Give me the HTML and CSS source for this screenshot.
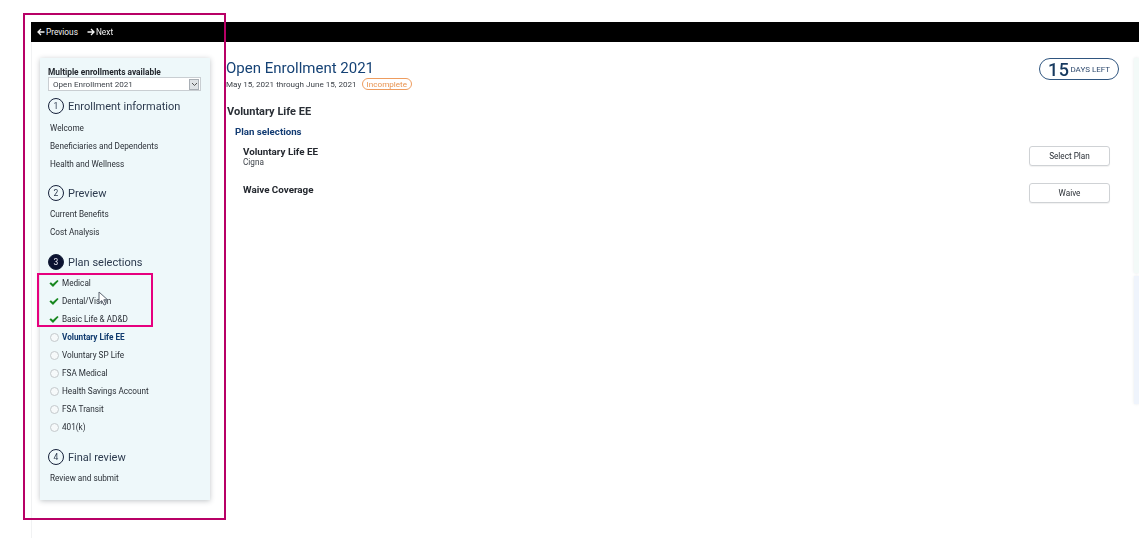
FILE: index.html
```html
<!DOCTYPE html>
<html lang="en">
<head>
<meta charset="utf-8">
<title>Open Enrollment 2021</title>
<link rel="stylesheet" href="styles.css">
</head>
<body>
<div class="app">
  <nav class="topbar">
    <span class="toplink"><svg width="8" height="8" viewBox="0 0 8 8"><path d="M7.500 4H1.500M4 1L1 4l3 3" fill="none" stroke="#f2f2f2" stroke-width="1.300"/></svg>Previous</span>
    <span class="toplink"><svg width="8" height="8" viewBox="0 0 8 8"><path d="M.5 4h6M4 1l3 3-3 3" fill="none" stroke="#f2f2f2" stroke-width="1.300"/></svg>Next</span>
  </nav>
  <div class="content">
    <aside class="sidebar">
      <label class="enroll-label">Multiple enrollments available</label>
      <div class="select">
        <span class="select-text">Open Enrollment 2021</span>
        <span class="select-btn"><svg width="7" height="5" viewBox="0 0 7 5"><path d="M1 1l2.500 2.500L6 1" fill="none" stroke="#555" stroke-width="1"/></svg></span>
      </div>
      <h2 class="step first"><span class="num">1</span>Enrollment information</h2>
      <ul class="links links-first">
        <li>Welcome</li>
        <li>Beneficiaries and Dependents</li>
        <li>Health and Wellness</li>
      </ul>
      <h2 class="step"><span class="num">2</span>Preview</h2>
      <ul class="links">
        <li>Current Benefits</li>
        <li>Cost Analysis</li>
      </ul>
      <h2 class="step"><span class="num active">3</span>Plan selections</h2>
      <ul class="plans">
        <li><svg class="check" width="10" height="9" viewBox="0 0 10 9"><path d="M.4 4.600l1.500-1.300 2 1.600L8.300.9l1.300 1.200L4 7.900z" fill="#17871f"/></svg>Medical</li>
        <li><svg class="check" width="10" height="9" viewBox="0 0 10 9"><path d="M.4 4.600l1.500-1.300 2 1.600L8.300.9l1.300 1.200L4 7.900z" fill="#17871f"/></svg>Dental/Vision</li>
        <li><svg class="check" width="10" height="9" viewBox="0 0 10 9"><path d="M.4 4.600l1.500-1.300 2 1.600L8.300.9l1.300 1.200L4 7.900z" fill="#17871f"/></svg>Basic Life &amp; AD&amp;D</li>
        <li class="current"><span class="radio"></span>Voluntary Life EE</li>
        <li><span class="radio"></span>Voluntary SP Life</li>
        <li><span class="radio"></span>FSA Medical</li>
        <li><span class="radio"></span>Health Savings Account</li>
        <li><span class="radio"></span>FSA Transit</li>
        <li><span class="radio"></span>401(k)</li>
      </ul>
      <h2 class="step"><span class="num">4</span>Final review</h2>
      <ul class="links">
        <li>Review and submit</li>
      </ul>
    </aside>
    <main class="main">
      <header class="head">
        <div>
          <h1 class="title">Open Enrollment 2021</h1>
          <div class="dates">May 15, 2021 through June 15, 2021<span class="badge">Incomplete</span></div>
        </div>
        <div class="days"><strong>15</strong><span>DAYS LEFT</span></div>
      </header>
      <h2 class="section">Voluntary Life EE</h2>
      <h3 class="sub">Plan selections</h3>
      <div class="plan plan-one">
        <div><div class="plan-name">Voluntary Life EE</div><div class="plan-co">Cigna</div></div>
        <button class="btn">Select Plan</button>
      </div>
      <div class="plan plan-two">
        <div><div class="plan-name">Waive Coverage</div></div>
        <button class="btn">Waive</button>
      </div>
    </main>
    <div class="rail">
      <div class="rail-a"></div>
      <div class="rail-b"></div>
    </div>
  </div>
</div>
<div class="mark mark-outer"></div>
<div class="mark mark-inner"></div>
<svg class="cursor" width="11" height="15" viewBox="0 0 11 15"><path d="M1 1v11l2.800-2.400L6 14l2-.9-2.200-4.300H9.600z" fill="#fff" stroke="#5a6470" stroke-width="1"/></svg>
</body>
</html>
```
FILE: styles.css
```css
* { box-sizing: border-box; }
html, body { margin: 0; padding: 0; }
body {
  width: 1139px;
  height: 538px;
  overflow: hidden;
  background: #fff;
  font-family: Roboto, "Liberation Sans", sans-serif;
  color: #2a2f36;
  position: relative;
}
.app {
  margin: 22px 0 0 31px;
  height: 516px;
  display: flex;
  flex-direction: column;
  border-left: 1px solid #f1f2f3;
  filter: blur(.3px);
}
.topbar {
  height: 20px;
  background: #000;
  color: #f2f2f2;
  display: flex;
  align-items: center;
  gap: 9px;
  padding-left: 6px;
  font-size: 8.300px;
  margin-left: -1px;
}
.toplink { display: flex; align-items: center; gap: 1px; }
.content { flex: 1; display: flex; min-height: 0; }
.sidebar {
  width: 170px;
  height: 442px;
  margin: 16px 0 0 8px;
  padding: 9px 8px 0;
  background: #eef8fa;
  box-shadow: 0 1px 5px rgba(60, 70, 80, .32);
  flex: none;
}
.enroll-label {
  display: block;
  font-size: 8.350px;
  font-weight: 700;
  line-height: 10px;
  color: #23272e;
}
.select {
  height: 14px;
  width: 153px;
  background: #fff;
  border: 1px solid #c9ced2;
  display: flex;
  align-items: center;
  justify-content: space-between;
  font-size: 8.100px;
  padding-left: 4px;
  color: #3a3f46;
}
.select-btn {
  width: 10px;
  height: 11px;
  margin-right: 1px;
  background: #dfe3e6;
  border: 1px solid #a9afb5;
  display: flex;
  align-items: center;
  justify-content: center;
}
.step {
  margin: 13px 0 0;
  height: 16px;
  display: flex;
  align-items: center;
  gap: 4px;
  font-size: 11px;
  font-weight: 400;
  color: #2c3a4e;
  white-space: nowrap;
}
.step.first { margin-top: 7px; }
.links-first + .step { margin-top: 12px; }
.num {
  width: 16px;
  height: 16px;
  border: 1.300px solid #16213a;
  border-radius: 50%;
  display: flex;
  align-items: center;
  justify-content: center;
  font-size: 8.500px;
  flex: none;
}
.num.active { background: #0b1230; color: #e8e8f0; }
.links, .plans { list-style: none; margin: 0; padding: 0; font-size: 8.200px; color: #2a2f36; }
.links { margin-top: 4px; }
.links-first { margin-top: 5px; }
.links li { height: 18px; line-height: 18px; padding-left: 2px; white-space: nowrap; }
.plans { margin-top: 4px; }
.plans li { height: 18px; display: flex; align-items: center; white-space: nowrap; padding-left: 1px; }
.plans .current { font-weight: 700; color: #0f3a6e; }
.check { margin-right: 3px; flex: none; }
.radio {
  width: 9px;
  height: 9px;
  margin: 1px 3px 0 1px;
  border: 1px solid #c4c9cc;
  border-radius: 50%;
  background: #f6f9fa;
  flex: none;
}
.main { flex: 1; min-width: 0; padding: 17px 15px 0 16px; }
.head { display: flex; justify-content: space-between; align-items: flex-start; }
.title { margin: 0; font-size: 15px; font-weight: 400; line-height: 19px; color: #154275; }
.dates { display: flex; align-items: center; font-size: 8.100px; line-height: 11px; color: #3a3f46; }
.badge {
  margin-left: 5px;
  padding: 0 4px;
  border: 1px solid #ee9c5e;
  border-radius: 7px;
  color: #e8934f;
  height: 12px;
  line-height: 10px;
}
.days {
  width: 80px;
  height: 22px;
  margin-top: -1px;
  border: 1px solid #2f557f;
  border-radius: 11px;
  display: flex;
  align-items: center;
  justify-content: center;
  gap: 1px;
  color: #2f4a6e;
  font-size: 8px;
}
.days strong { font-size: 18px; font-weight: 500; color: #16395f; letter-spacing: .5px; }
.section { margin: 15px 0 0 1px; font-size: 11px; font-weight: 700; line-height: 14px; color: #2a2f36; }
.sub { margin: 6px 0 0 9px; font-size: 9.700px; font-weight: 700; line-height: 13px; color: #123b72; }
.plan {
  display: flex;
  justify-content: space-between;
  align-items: flex-start;
  margin: 0 9px 0 17px;
  height: 37px;
}
.plan-one { margin-top: 8px; }
.plan-two .plan-name { margin-top: 1px; }
.plan-name { font-size: 9.800px; font-weight: 700; line-height: 12px; color: #23272e; }
.plan-co { font-size: 8.200px; line-height: 9px; color: #3a3f46; }
.btn {
  width: 81px;
  height: 20px;
  background: #fff;
  border: 1px solid #cfd2d5;
  border-radius: 3px;
  font: 8.200px Roboto, sans-serif;
  color: #2a2f36;
  box-shadow: 0 1px 1px rgba(0, 0, 0, .06);
  padding: 0;
}
.rail { width: 5px; flex: none; margin-top: 16px; display: flex; flex-direction: column; gap: 3px; height: 346px; }
.rail-a { height: 215px; background: #f3faf8; box-shadow: 0 0 3px rgba(60, 70, 80, .12); }
.rail-b { flex: 1; background: #eff4fc; box-shadow: 0 0 3px rgba(60, 70, 80, .12); }
.mark { position: absolute; pointer-events: none; }
.mark-outer { left: 23px; top: 13px; width: 203px; height: 507px; border: 2px solid #b80066; }
.mark-inner { left: 37px; top: 273px; width: 116px; height: 54px; border: 2px solid #e6007e; }
.cursor { position: absolute; left: 98px; top: 291px; }
```
